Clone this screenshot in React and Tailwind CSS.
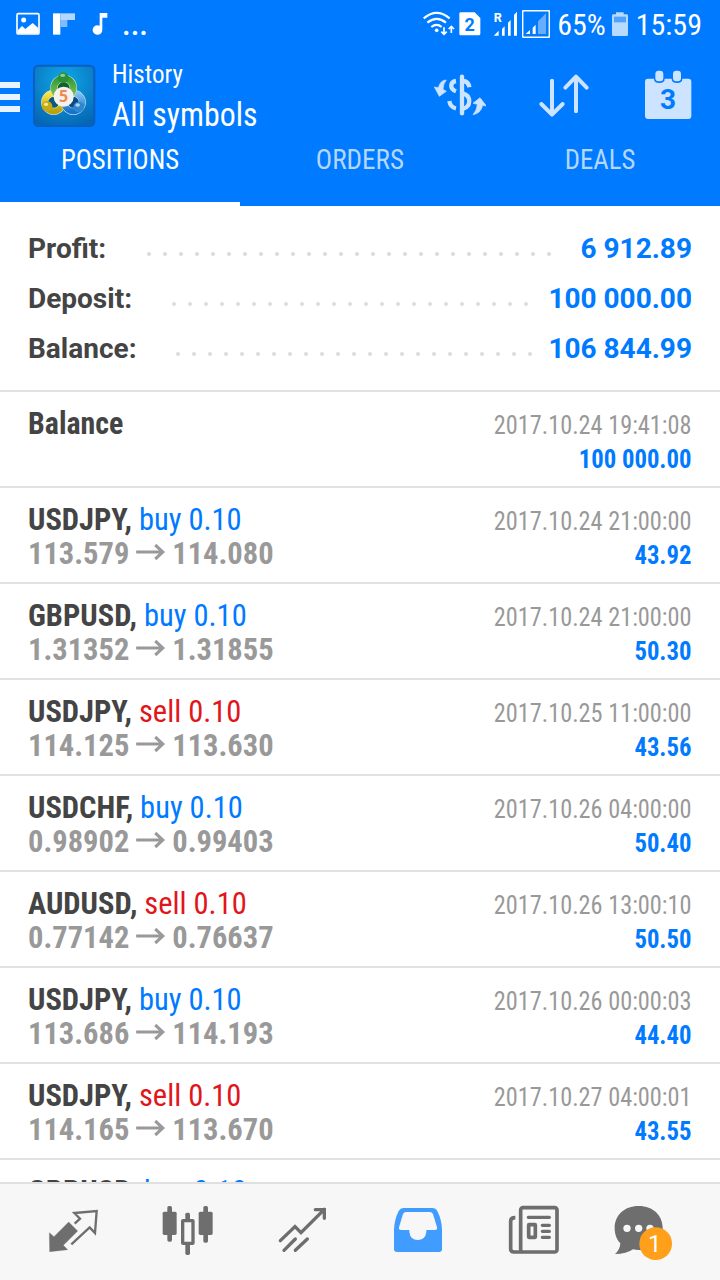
import React from 'react';

const summary = [
  { label: "Profit:", value: "6 912.89", dots: 26, gap: "mr-[30px]" },
  { label: "Deposit:", value: "100 000.00", dots: 23, gap: "mr-[20px]" },
  { label: "Balance:", value: "106 844.99", dots: 23, gap: "mr-[16px]" },
];

const positions = [
  { symbol: "USDJPY", side: "buy", volume: "0.10", open: "113.579", close: "114.080", time: "2017.10.24 21:00:00", profit: "43.92" },
  { symbol: "GBPUSD", side: "buy", volume: "0.10", open: "1.31352", close: "1.31855", time: "2017.10.24 21:00:00", profit: "50.30" },
  { symbol: "USDJPY", side: "sell", volume: "0.10", open: "114.125", close: "113.630", time: "2017.10.25 11:00:00", profit: "43.56" },
  { symbol: "USDCHF", side: "buy", volume: "0.10", open: "0.98902", close: "0.99403", time: "2017.10.26 04:00:00", profit: "50.40" },
  { symbol: "AUDUSD", side: "sell", volume: "0.10", open: "0.77142", close: "0.76637", time: "2017.10.26 13:00:10", profit: "50.50" },
  { symbol: "USDJPY", side: "buy", volume: "0.10", open: "113.686", close: "114.193", time: "2017.10.26 00:00:03", profit: "44.40" },
  { symbol: "USDJPY", side: "sell", volume: "0.10", open: "114.165", close: "113.670", time: "2017.10.27 04:00:01", profit: "43.55" },
  { symbol: "GBPUSD", side: "buy", volume: "0.10" },
];

const StatusBar = () => (
  <div className="flex h-12 items-center justify-between pl-4 pr-[18px] text-[30px] leading-[48px]">
    <div className="flex">
      <svg viewBox="48 0 72 144" className="h-12 w-6" fill="none">
        <rect x="51" y="41" width="66" height="61" rx="4" stroke="#fff" strokeWidth="5" />
        <circle cx="71" cy="60" r="7.5" fill="#fff" />
        <path d="M54 90 L66 78 L76 87 L98 69 L115 84 V101 H54 Z" fill="#fff" />
      </svg>
      <svg viewBox="156 0 72 144" className="ml-3 h-12 w-6">
        <path d="M159 40 H181 V104 H159 Z" fill="#fff" />
        <path d="M181 40 H225 V60 H181 Z" fill="#b3d7ff" />
        <path d="M181 60 H202 V81 H181 Z" fill="#80bcff" />
      </svg>
      <svg viewBox="276 0 48 144" className="ml-4 h-12 w-4" fill="#fff">
        <path d="M299 39 H322 V53 H307 V90 A14.5 14.5 0 1 1 299 77 Z" />
      </svg>
      <span className="ml-[14px] mt-px text-[31px] font-medium">...</span>
    </div>
    <div className="flex">
      <svg viewBox="72 0 96 144" className="h-12 w-8" fill="none" stroke="#fff" strokeWidth="6.5">
        <path d="M74 55 Q113 22 152 55" />
        <path d="M85 68 Q113 45 141 68" />
        <path d="M97 81 Q113 68 128 81" />
        <circle cx="113" cy="91" r="5.5" fill="#fff" stroke="none" />
        <path d="M135 82 V103 M127 95 L135 103 L143 95 M157 99 V79 M149 87 L157 79 L165 87" strokeWidth="5" />
      </svg>
      <svg viewBox="180 0 66 144" className="ml-1 h-12 w-[22px]">
        <path d="M185 37 H227 L244 54 V101 Q244 106 239 106 H185 Q181 106 181 101 V41 Q181 37 185 37 Z" fill="#fff" />
        <text x="212" y="93" textAnchor="middle" fontSize="54" fontWeight="700" fill="#007aff" className="font-['Roboto'] [font-stretch:normal]">2</text>
      </svg>
      <svg viewBox="282 0 75 144" className="ml-3 h-12 w-[25px]" fill="#fff">
        <text x="284" y="67" fontSize="38" fontWeight="700" className="font-['Roboto'] [font-stretch:normal]">R</text>
        <path d="M284 107 L299 92 V107 Z M309 87 L317 79 V107 H309 Z M327 68 L335 60 V107 H327 Z M345 44 L354 35 V107 H345 Z" />
      </svg>
      <svg viewBox="369 0 84 144" className="ml-1 h-12 w-7">
        <rect x="371" y="32" width="80" height="80" rx="2" fill="none" stroke="#fff" strokeWidth="4.5" />
        <path d="M417 64 L441 40 V102 H417 Z" fill="#66afff" />
        <path d="M380 102 L393 90 V102 Z M401 83 L410 74 V102 H401 Z" fill="#fff" />
      </svg>
      <span className="ml-[7px] mt-px">65%</span>
      <svg viewBox="636 0 48 144" className="ml-[6px] h-12 w-4">
        <path d="M648 37 H671 V43 H680 Q684 43 684 47 V104 Q684 108 680 108 H640 Q636 108 636 104 V47 Q636 43 640 43 H648 Z" fill="#b8daff" />
        <rect x="642" y="50" width="36" height="17" fill="#4fa3ff" />
      </svg>
      <span className="ml-2 mt-px">15:59</span>
    </div>
  </div>
);

const AppLogo = () => (
  <svg viewBox="99 192 189 192" className="ml-[13px] h-16 w-[63px]">
    <defs>
      <radialGradient id="tile" cx="50%" cy="25%" r="80%">
        <stop offset="0%" stopColor="#11a8e8" />
        <stop offset="100%" stopColor="#0566b4" />
      </radialGradient>
      <linearGradient id="green" x1="0" y1="0" x2="0" y2="1">
        <stop offset="0%" stopColor="#2e9a3a" />
        <stop offset="100%" stopColor="#8cc653" />
      </linearGradient>
      <linearGradient id="yellow" x1="0" y1="0" x2="0" y2="1">
        <stop offset="0%" stopColor="#f7e44a" />
        <stop offset="100%" stopColor="#b9a011" />
      </linearGradient>
      <linearGradient id="blue" x1="0" y1="0" x2="0" y2="1">
        <stop offset="0%" stopColor="#7cc3f4" />
        <stop offset="100%" stopColor="#1673c8" />
      </linearGradient>
    </defs>
    <rect x="102" y="197" width="181" height="181" rx="13" fill="url(#tile)" stroke="#0a5fc0" strokeWidth="6" />
    <circle cx="161" cy="307" r="27" fill="#0c5a7a" stroke="#e9f0c0" strokeWidth="21" />
    <circle cx="161" cy="307" r="27" fill="none" stroke="url(#yellow)" strokeWidth="18" />
    <circle cx="220" cy="307" r="27" fill="#0c4a80" stroke="#d7ecfb" strokeWidth="21" />
    <circle cx="220" cy="307" r="27" fill="none" stroke="url(#blue)" strokeWidth="18" />
    <circle cx="191" cy="264" r="29" fill="#14602c" stroke="#d8f0c8" strokeWidth="22" />
    <circle cx="191" cy="264" r="29" fill="none" stroke="url(#green)" strokeWidth="19" />
    <circle cx="190" cy="233" r="16" fill="#2a8f38" />
    <ellipse cx="188" cy="226" rx="8" ry="5" fill="#8fd08a" />
    <circle cx="141" cy="319" r="16" fill="#c4a918" />
    <ellipse cx="138" cy="313" rx="7" ry="5" fill="#f4ea92" />
    <circle cx="236" cy="321" r="16" fill="#2f86cf" />
    <ellipse cx="233" cy="315" rx="7" ry="5" fill="#a9d8f6" />
    <circle cx="191" cy="290" r="30" fill="#f4f2f0" />
    <text x="191" y="307" textAnchor="middle" fontSize="48" fontWeight="700" fill="#f08a4b" className="font-['Open_Sans'] [font-stretch:normal]">5</text>
  </svg>
);

const Header = () => (
  <header className="flex h-[206px] shrink-0 flex-col bg-[#007aff] text-white">
    <StatusBar />
    <div className="flex h-[92px]">
      <div className="mt-[34px] flex w-5 flex-col gap-[6px]">
        <span className="h-[6px] bg-[#e9f3ff]"></span>
        <span className="h-[6px] bg-[#e9f3ff]"></span>
        <span className="h-[6px] bg-[#e9f3ff]"></span>
      </div>
      <div className="mt-4">
        <AppLogo />
      </div>
      <div className="ml-4 mt-2 flex-1">
        <p className="origin-left scale-x-[0.965] text-[26px] leading-9">History</p>
        <p className="origin-left scale-x-[0.965] text-[33px] leading-[46px]">All symbols</p>
      </div>
      <div className="mr-7 mt-[22px] flex">
        {/* Currency exchange */}
        <svg viewBox="102 210 156 150" className="h-[50px] w-[52px]" fill="none" stroke="#cce4ff">
          <path d="M186 230 V340" strokeWidth="13" strokeLinecap="round" />
          <path d="M168 243 C149 246 149 267 168 274 M148 303 Q151 322 168 325" strokeWidth="13" />
          <path d="M190 243 Q206 245 208 262 M190 281 C214 288 213 319 190 326" strokeWidth="13" />
          <path d="M139 240 Q121 240 115 263 L103 261 L118 289 L139 274 L129 268 Q130 250 139 240 Z M219 344 Q242 341 248 316 L259 318 L240 293 L219 310 L232 313 Q230 332 219 344 Z" fill="#cce4ff" strokeWidth="2" />
        </svg>
        <svg viewBox="414 210 156 150" className="ml-[52px] h-[50px] w-[52px]" fill="none" stroke="#cce4ff" strokeWidth="12" strokeLinecap="round" strokeLinejoin="round">
          <path d="M456 242 V343 M424 312 L456 344 L488 312" />
          <path d="M528 334 V231 M496 263 L528 230 L560 263" />
        </svg>
        <svg viewBox="732 210 144 150" className="ml-[54px] h-[50px] w-12">
          <path d="M744 236 H762 Q762 249 778 249 Q794 249 794 236 H815 Q815 249 831 249 Q847 249 847 236 H865 Q874 236 874 245 V348 Q874 357 865 357 H744 Q735 357 735 348 V245 Q735 236 744 236 Z" fill="#cce4ff" />
          <rect x="766" y="212" width="24" height="32" rx="10" fill="#cce4ff" />
          <rect x="819" y="212" width="24" height="32" rx="10" fill="#cce4ff" />
          <text x="804" y="328" textAnchor="middle" fontSize="84" fontWeight="700" fill="#007aff" className="font-['Roboto'] [font-stretch:normal]">3</text>
        </svg>
      </div>
    </div>
    <nav className="grid flex-1 grid-cols-3 text-center text-[28px] leading-10">
      <div className="border-b-4 border-white">
        <p className="scale-x-[0.955]">POSITIONS</p>
      </div>
      <div className="text-[#b3d7ff]">
        <p className="scale-x-[0.97]">ORDERS</p>
      </div>
      <div className="text-[#b3d7ff]">
        <p className="scale-x-[0.955]">DEALS</p>
      </div>
    </nav>
  </header>
);

const Summary = () => (
  <section className="h-[186px] shrink-0 border-b-2 border-[#e2e2e2] px-7 pt-[18px] font-['Roboto'] text-[28px] font-bold leading-[50px] [font-stretch:normal]">
    {summary.map((item) => (
      <div key={item.label} className="flex h-[50px] items-center">
        <span className="flex-1 text-[#444]">{item.label}</span>
        <div className={`mt-[9px] flex gap-3 ${item.gap}`}>
          {Array.from({ length: item.dots }, (_, i) => (
            <span key={i} className="size-1 rounded-full bg-[#dcdcdc]"></span>
          ))}
        </div>
        <span className="text-[#007aff]">{item.value}</span>
      </div>
    ))}
  </section>
);

const PriceArrow = () => (
  <svg viewBox="0 0 30 18" className="mx-[7px] mb-[3px] h-[18px] w-[31px]" fill="none" stroke="#999" strokeWidth="3">
    <path d="M0 9 H28 M20 2 L28 9 L20 16" />
  </svg>
);

const PositionRow = ({ item }) => (
  <li className="flex h-24 shrink-0 justify-between border-b-2 border-[#e2e2e2] px-7">
    <div className="origin-left scale-x-[0.953] pt-[14px] text-[32px] leading-[34px]">
      <p>
        <span className="font-bold text-[#444]">{item.symbol},</span>{" "}
        <span className={item.side === "buy" ? "text-[#007aff]" : "text-[#e0161b]"}>
          {item.side} {item.volume}
        </span>
      </p>
      {item.open && (
        <p className="flex items-center font-bold text-[#999]">
          {item.open}
          <PriceArrow />
          {item.close}
        </p>
      )}
    </div>
    <div className="pt-4 text-right text-[26px] leading-[34px]">
      <p className="origin-right scale-x-[0.935] text-[#999]">{item.time}</p>
      <p className="origin-right scale-x-[0.95] font-bold text-[#007aff]">{item.profit}</p>
    </div>
  </li>
);

const History = () => (
  <ul className="flex min-h-0 flex-1 flex-col overflow-hidden">
    <li className="flex h-24 shrink-0 justify-between border-b-2 border-[#e2e2e2] px-7">
      <p className="origin-left scale-x-[0.935] pt-[14px] text-[32px] font-bold leading-[34px] text-[#444]">Balance</p>
      <div className="pt-4 text-right text-[26px] leading-[34px]">
        <p className="origin-right scale-x-[0.935] text-[#999]">2017.10.24 19:41:08</p>
        <p className="origin-right scale-x-[0.95] font-bold text-[#007aff]">100 000.00</p>
      </div>
    </li>
    {positions.map((item, index) => (
      <PositionRow key={index} item={item} />
    ))}
  </ul>
);

const BottomNav = () => (
  <footer className="flex h-[98px] shrink-0 justify-center border-t-2 border-[#e0e0e0] bg-[#f7f7f7]">
    {/* Quotes */}
    <div className="flex w-[115px] justify-center">
      <svg viewBox="129 42 180 288" className="h-24 w-[60px]" fill="none" stroke="#6e6e6e" strokeWidth="7">
        <path d="M148 188 L162 200 L206 156 L233 183 L190 226 L203 239 L149 245 Z" fill="#6e6e6e" strokeWidth="1" />
        <path d="M224 161 L240 146 L223 129 L290 123 L285 189 L269 172 L214 223" />
      </svg>
    </div>
    {/* Charts */}
    <div className="flex w-[115px] justify-center">
      <svg viewBox="474 42 180 288" className="h-24 w-[60px]" fill="#6e6e6e">
        <rect x="488" y="125" width="42" height="70" rx="5" />
        <rect x="502" y="108" width="14" height="107" rx="5" />
        <rect x="596" y="125" width="42" height="70" rx="5" />
        <rect x="610" y="108" width="14" height="110" rx="5" />
        <rect x="556" y="128" width="14" height="127" rx="5" />
        <rect x="548" y="152" width="31" height="68" rx="1" fill="#f7f7f7" stroke="#6e6e6e" strokeWidth="10" />
      </svg>
    </div>
    {/* Trade */}
    <div className="flex w-[115px] justify-center">
      <svg viewBox="819 42 180 288" className="h-24 w-[60px]" fill="none" stroke="#6e6e6e" strokeWidth="10" strokeLinecap="round">
        <path d="M841 212 L885 170 L903 188 L973 118 M946 119 H973 V145" />
        <path d="M852 241 L886 207 M886 241 L922 207" />
      </svg>
    </div>
    {/* History */}
    <div className="flex w-[115px] justify-center">
      <svg viewBox="84 42 180 288" className="h-24 w-[60px]">
        <path d="M130 114 H217 Q227 114 232 123 Q246 151 246 181 V237 Q246 246 237 246 H111 Q102 246 102 237 V181 Q102 151 116 123 Q121 114 130 114 Z" fill="#409cff" />
        <path d="M138 126 H209 Q216 126 219 132 L231 172 Q233 180 225 180 H199 V186 Q196 210 173 210 Q151 210 148 186 V180 H124 Q115 180 117 172 L129 132 Q132 126 138 126 Z" fill="#f7f7f7" />
      </svg>
    </div>
    {/* News */}
    <div className="flex w-[115px] justify-center">
      <svg viewBox="429 42 180 288" className="h-24 w-[60px]" fill="none" stroke="#6e6e6e" strokeWidth="11">
        <rect x="482" y="113" width="109" height="133" rx="7" />
        <path d="M466 143 Q452 143 452 153 V237 Q452 246 462 246 H487" />
        <path d="M505 142 H568 M547 166 H568 M547 184 H568 M547 202 H568" strokeLinecap="round" strokeWidth="10" />
        <rect x="506" y="164" width="20" height="38" rx="1" />
      </svg>
    </div>
    {/* Messages */}
    <div className="flex w-[115px] justify-center">
      <svg viewBox="774 42 180 288" className="h-24 w-[60px] overflow-visible">
        <path d="M836 108 C880 108 908 137 908 174 C908 214 878 240 836 240 Q828 240 819 238 Q800 252 765 252 Q780 240 781 220 C769 208 764 191 764 174 C764 137 792 108 836 108 Z" fill="#6e6e6e" />
        <circle cx="801" cy="175" r="11" fill="#f7f7f7" />
        <circle cx="836" cy="175" r="11" fill="#f7f7f7" />
        <circle cx="870" cy="175" r="11" fill="#f7f7f7" />
        <circle cx="887" cy="221" r="49" fill="#ff9f1a" />
        <text x="884" y="246" textAnchor="middle" fontSize="72" fill="#fff" className="font-['Roboto'] [font-stretch:normal]">1</text>
      </svg>
    </div>
  </footer>
);

const App = () => {
  return (
    <div className="flex h-screen flex-col overflow-hidden bg-white font-['Roboto_Condensed','Roboto',sans-serif] [font-stretch:condensed]">
      <Header />
      <Summary />
      <History />
      <BottomNav />
    </div>
  );
};

export default App;
